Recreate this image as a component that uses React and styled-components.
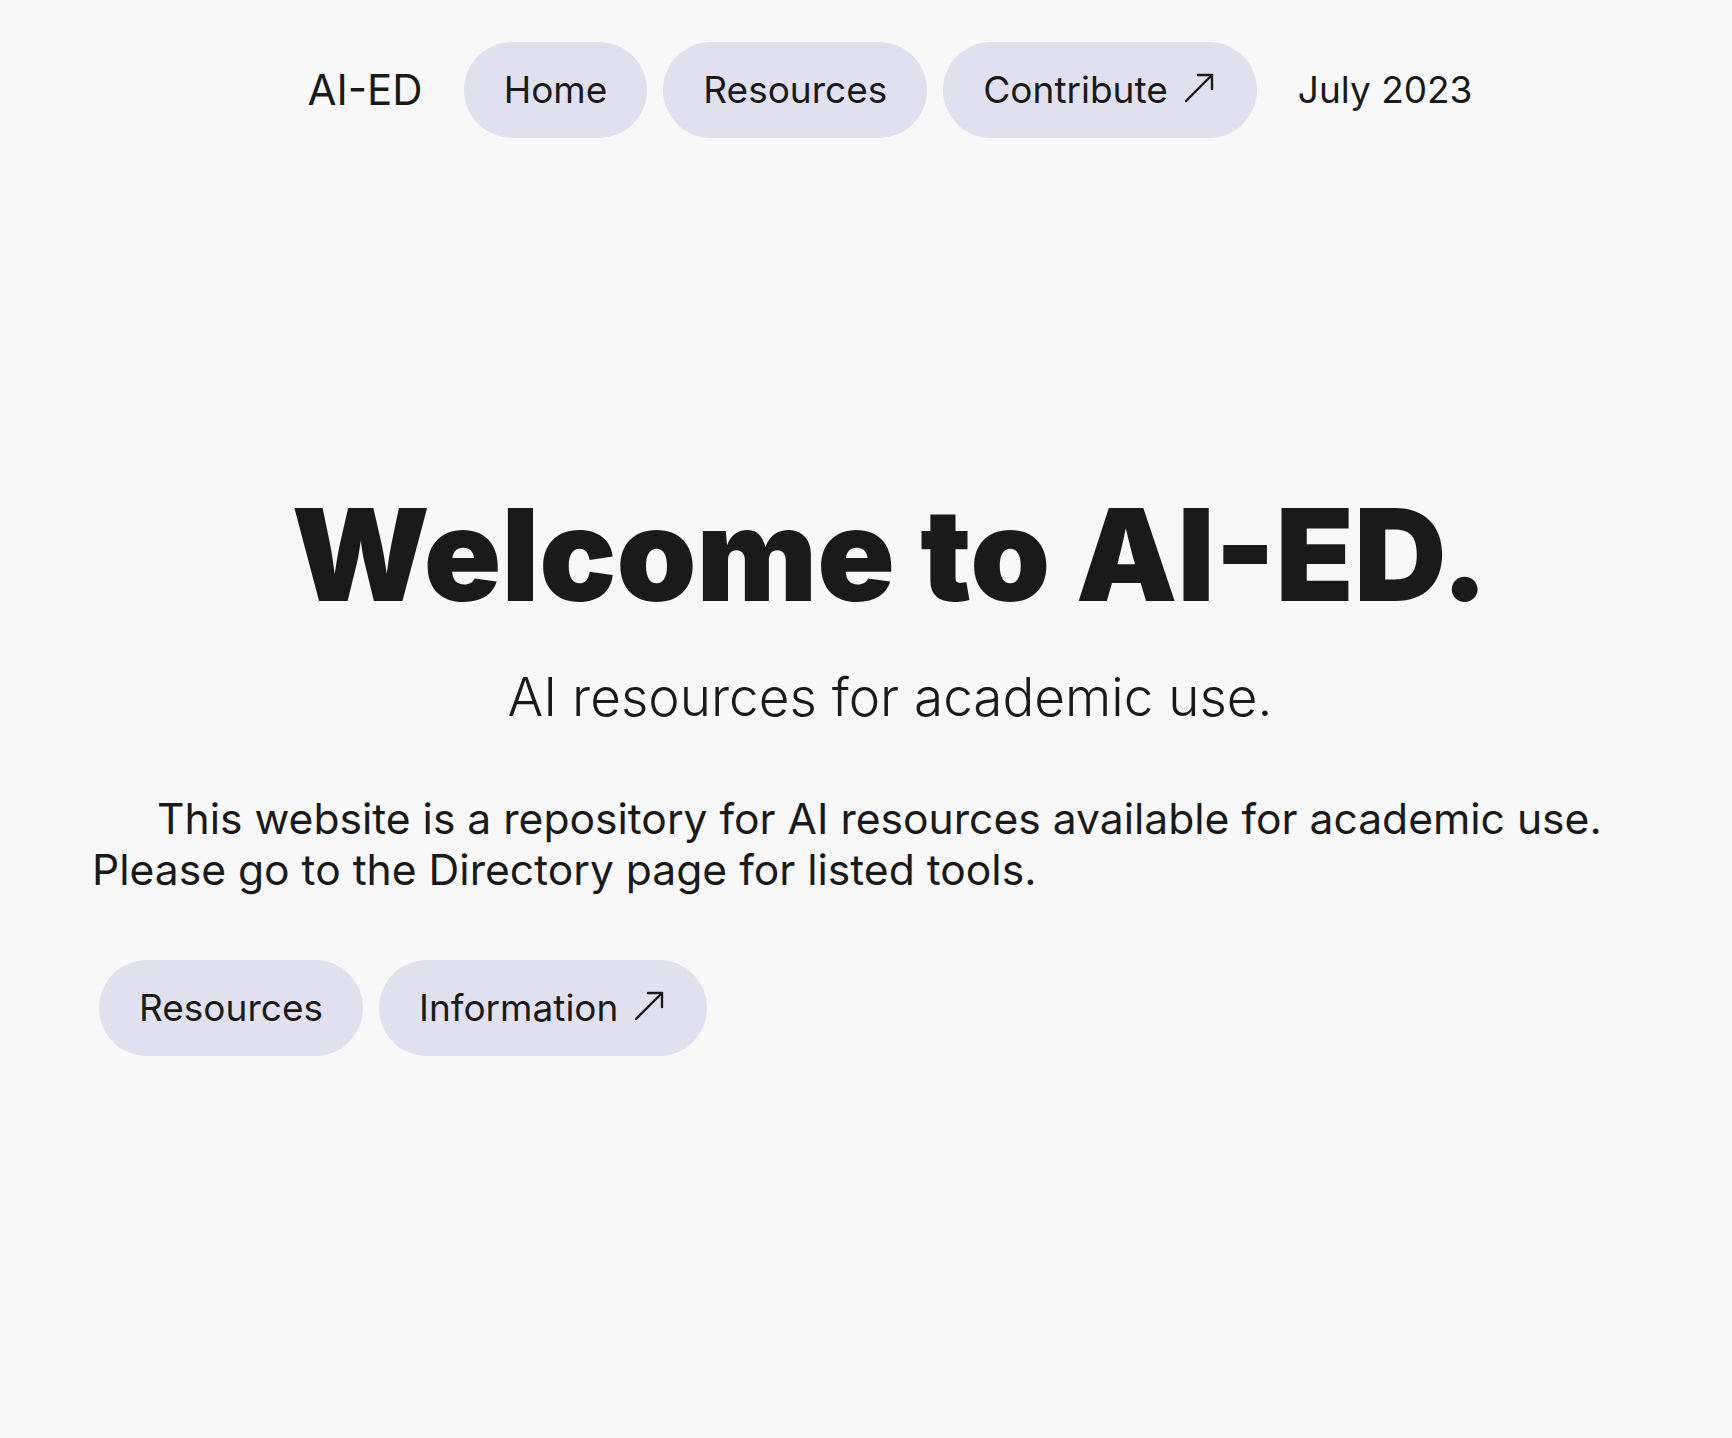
import React from 'react';
import styled, { createGlobalStyle } from 'styled-components';

const GlobalStyle = createGlobalStyle`
  html, body {
    margin: 0;
    padding: 0;
    background: #f8f8f8;
  }
  body {
    font-family: Inter, "Noto Sans", sans-serif;
    color: #1a1a1a;
  }
`;

const Page = styled.div`
  min-height: 1438px;
  box-sizing: border-box;
  padding: 42px 44px 0 92px;
`;

const Nav = styled.nav`
  display: flex;
  justify-content: center;
  align-items: center;
  gap: 16px;
`;

const NavText = styled.span`
  font-size: ${(p) => (p.$brand ? '42px' : '37px')};
  line-height: 48px;
  padding: 0 25px;
  white-space: nowrap;
`;

const Pill = styled.a`
  display: inline-flex;
  align-items: center;
  gap: 16px;
  font-size: 37px;
  line-height: 48px;
  padding: 24px 40px;
  border-radius: 48px;
  background: #e1e0ee;
  color: #1a1a1a;
  text-decoration: none;
  white-space: nowrap;
`;

const ArrowIcon = styled.svg`
  width: 30px;
  height: 30px;
  flex-shrink: 0;
  margin: -4px 3px 0 0;
`;

const Hero = styled.header`
  margin-top: 340px;
  text-align: center;
`;

const Title = styled.h1`
  margin: 0;
  font-size: 128px;
  font-weight: 900;
  line-height: 1.2;
`;

const Subtitle = styled.p`
  margin: 34px 0 0;
  font-size: 53px;
  font-weight: 300;
  line-height: 1.2;
`;

const Intro = styled.p`
  margin: 64px 0 0;
  font-size: 42.6px;
  line-height: 51px;
  text-indent: 65px;
`;

const Actions = styled.div`
  display: flex;
  gap: 16px;
  margin-top: 65px;
  padding-left: 7px;
`;

const Arrow = () => (
  <ArrowIcon viewBox="0 0 30 30" fill="none" stroke="#1a1a1a" strokeWidth="2.4" strokeLinecap="round" strokeLinejoin="round">
    <path d="M2 28 L28 2" />
    <path d="M14 2 H28 V16" />
  </ArrowIcon>
);

const App = () => {
  return (
    <Page>
      <GlobalStyle />
      <Nav>
        <NavText $brand>AI-ED</NavText>
        <Pill href="#">Home</Pill>
        <Pill href="#">Resources</Pill>
        <Pill href="#">Contribute <Arrow /></Pill>
        <NavText>July 2023</NavText>
      </Nav>
      <Hero>
        <Title>Welcome to AI-ED.</Title>
        <Subtitle>AI resources for academic use.</Subtitle>
      </Hero>
      <Intro>
        This website is a repository for AI resources available for academic use.
        Please go to the Directory page for listed tools.
      </Intro>
      <Actions>
        <Pill href="#">Resources</Pill>
        <Pill href="#">Information <Arrow /></Pill>
      </Actions>
    </Page>
  );
};

export default App;
